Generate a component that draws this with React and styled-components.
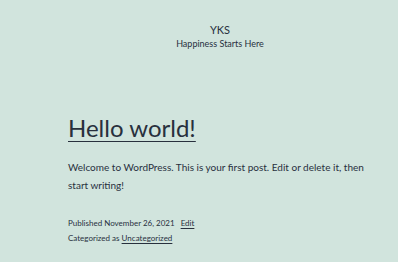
import React from "react";
import styled, { createGlobalStyle } from "styled-components";

const Global = createGlobalStyle`
  html, body { margin: 0; padding: 0; }
  body {
    background: #d1e4dd;
    color: #28303d;
    font-family: "Lato", "Open Sans", sans-serif;
    width: 398px;
    height: 262px;
    overflow: hidden;
  }
`;

const Page = styled.div`
  display: flex;
  flex-direction: column;
  padding: 23px 0 0 68px;
`;

const Branding = styled.header`
  display: flex;
  flex-direction: column;
  align-items: center;
  width: 304px;
`;

const SiteTitle = styled.div`
  font-size: 11px;
  line-height: 14px;
`;

const Tagline = styled.div`
  font-size: 9px;
  line-height: 12px;
  margin-top: 1px;
`;

const Title = styled.h1`
  margin: 63px 0 0;
  font-weight: 400;
  font-size: 24px;
  line-height: 30px;
`;

const TitleLink = styled.a`
  color: inherit;
  text-decoration: underline;
  text-decoration-thickness: 1px;
  text-underline-offset: 4px;
`;

const Body = styled.p`
  margin: 16px 0 0;
  font-size: 10px;
  line-height: 17.5px;
  width: 310px;
`;

const Meta = styled.div`
  margin-top: 22px;
  font-size: 8px;
  line-height: 15px;
`;

const MetaRow = styled.div``;

const MetaLink = styled.a`
  color: inherit;
  text-decoration: underline;
  text-decoration-thickness: 1px;
  text-underline-offset: 2px;
  margin-left: ${(p) => p.$gap || 0}px;
`;

export default function App() {
  return (
    <>
      <Global />
      <Page>
        <Branding>
          <SiteTitle>YKS</SiteTitle>
          <Tagline>Happiness Starts Here</Tagline>
        </Branding>
        <Title><TitleLink href="#">Hello world!</TitleLink></Title>
        <Body>Welcome to WordPress. This is your first post. Edit or delete it, then start writing!</Body>
        <Meta>
          <MetaRow>Published November 26, 2021<MetaLink href="#" $gap={6}>Edit</MetaLink></MetaRow>
          <MetaRow>Categorized as <MetaLink href="#">Uncategorized</MetaLink></MetaRow>
        </Meta>
      </Page>
    </>
  );
}
